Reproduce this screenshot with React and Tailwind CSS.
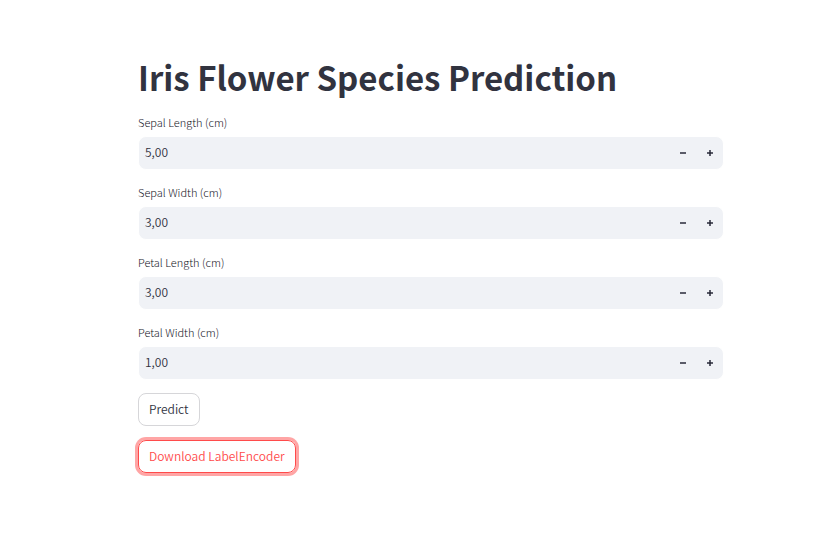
const fields = [
  { id: "sepal-length", label: "Sepal Length (cm)", value: "5,00" },
  { id: "sepal-width", label: "Sepal Width (cm)", value: "3,00" },
  { id: "petal-length", label: "Petal Length (cm)", value: "3,00" },
  { id: "petal-width", label: "Petal Width (cm)", value: "1,00" },
];

function StepButton({ label, children }) {
  return (
    <button type="button" aria-label={label} className="flex w-[27px] items-center justify-center">
      <svg viewBox="0 0 6 6" className="size-[6px]" fill="#5b5c69" shapeRendering="crispEdges">
        {children}
      </svg>
    </button>
  );
}

function NumberField({ id, label, value }) {
  return (
    <div className="flex flex-col">
      <label htmlFor={id} className="h-[22px] text-[11px] leading-4 font-light text-[#15161f]">
        {label}
      </label>
      <div className="flex h-[34px] overflow-hidden rounded-lg border border-white bg-[#f0f2f6]">
        <input
          id={id}
          type="text"
          inputMode="decimal"
          defaultValue={value}
          className="min-w-0 flex-1 bg-transparent px-[6px] pb-[2px] text-[12px] leading-5 font-[350] outline-none"
        />
        <StepButton label={`Decrease ${label}`}>
          <path d="M0 2h6v2H0z" />
        </StepButton>
        <StepButton label={`Increase ${label}`}>
          <path d="M2 0h2v2h2v2H4v2H2V4H0V2h2z" />
          <path d="M2 2h2v2H2z" fill="#31333f" />
        </StepButton>
      </div>
    </div>
  );
}

export default function App() {
  return (
    <main className="min-h-screen bg-white pt-[53px] pr-[97px] pl-[138px] font-['Noto_Sans_CJK_SC','Noto_Sans',sans-serif] text-[#31333f]">
      <h1 className="text-[33px] leading-[48px] font-bold">Iris Flower Species Prediction</h1>
      <form className="flex flex-col items-start pt-[13px]" onSubmit={(e) => e.preventDefault()}>
        <div className="flex w-full flex-col gap-[14px]">
          {fields.map((field) => (
            <NumberField key={field.id} {...field} />
          ))}
        </div>
        <button
          type="submit"
          className="mt-[13px] h-[33px] rounded-lg border border-[#d6d6d9] px-[10px] pb-[2px] text-[12px] leading-5 font-[350]"
        >
          Predict
        </button>
        <button
          type="button"
          className="mt-[14px] h-[33px] rounded-lg border border-[#ff4b4b] px-[10px] pb-[2px] text-[12px] leading-5 font-[350] text-[#ff4b4b] ring-3 ring-[#ff4b4b]/50"
        >
          Download LabelEncoder
        </button>
      </form>
    </main>
  );
}
